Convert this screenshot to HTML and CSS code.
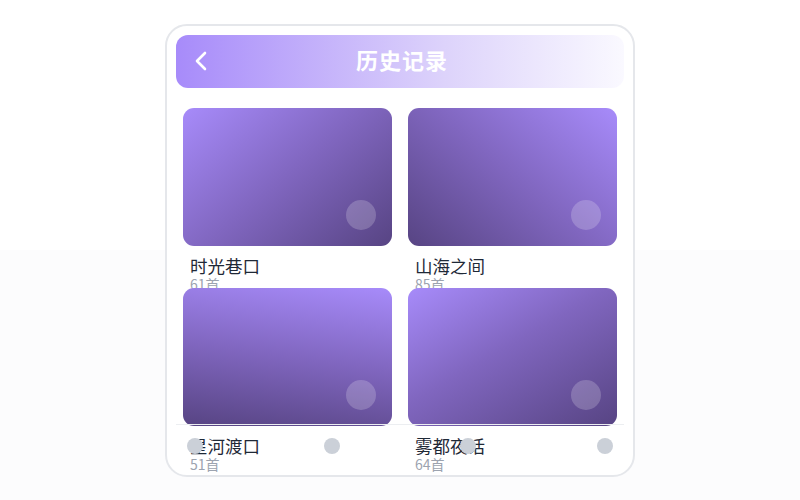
FILE: index.html
```html
<!DOCTYPE html>
<html lang="zh-CN">
<head>
  <meta charset="UTF-8">
  <meta name="viewport" content="width=device-width, initial-scale=1.0">
  <title>历史记录</title>
  <link rel="stylesheet" href="styles.css">
</head>
<body>
  <div class="phone">
    <div class="header">
      <svg class="back" width="14" height="20" viewBox="0 0 14 20">
        <path d="M11 2 L3 10 L11 18" fill="none" stroke="#fff" stroke-width="2.6" stroke-linecap="round" stroke-linejoin="round"/>
      </svg>
      <h1>历史记录</h1>
    </div>

    <div class="list">
      <div class="item">
        <div class="cover c1"><span class="play"></span></div>
        <div class="info">
          <p class="name">时光巷口</p>
          <p class="count">61首</p>
        </div>
      </div>
      <div class="item">
        <div class="cover c2"><span class="play"></span></div>
        <div class="info">
          <p class="name">山海之间</p>
          <p class="count">85首</p>
        </div>
      </div>
      <div class="item">
        <div class="cover c3"><span class="play"></span></div>
        <div class="info">
          <p class="name">星河渡口</p>
          <p class="count">51首</p>
        </div>
      </div>
      <div class="item">
        <div class="cover c4"><span class="play"></span></div>
        <div class="info">
          <p class="name">雾都夜话</p>
          <p class="count">64首</p>
        </div>
      </div>
    </div>

    <div class="tabbar">
      <span class="dot"></span>
      <span class="dot"></span>
      <span class="dot"></span>
      <span class="dot"></span>
    </div>
  </div>
</body>
</html>
```

FILE: styles.css
```css
* {
  margin: 0;
  padding: 0;
  box-sizing: border-box;
}
html {
  background: linear-gradient(to bottom, #ffffff 50%, #fcfcfd 50%);
}
body {
  font-family: "Noto Sans CJK SC", "Noto Sans", sans-serif;
  width: 100vw;
  height: 100vh;
  display: flex;
  justify-content: center;
  align-items: center;
}
.phone {
  position: relative;
  width: 470px;
  height: 453px;
  margin-top: 1px;
  padding: 9px;
  background: #fff;
  border: 2px solid #e5e7eb;
  border-radius: 22px;
  overflow: hidden;
}
.header {
  position: relative;
  height: 53px;
  padding-bottom: 5px;
  border-radius: 12px;
  background: linear-gradient(90deg, #a78bfa 0%, #ddd3fb 60%, #faf9ff 100%);
  display: flex;
  align-items: center;
  justify-content: center;
}
.back {
  position: absolute;
  left: 18px;
  top: 16px;
}
.header h1 {
  color: #fff;
  font-size: 22px;
  line-height: 28px;
  font-weight: 700;
  letter-spacing: 1px;
  margin-left: 4px;
}
.list {
  display: grid;
  grid-template-columns: 1fr 1fr;
  grid-auto-rows: 180px;
  column-gap: 16px;
  padding: 20px 7px 0;
}
.item {
  height: 180px;
}
.cover {
  position: relative;
  height: 138px;
  border-radius: 11px;
}
.c1 { background: linear-gradient(140deg, #a78bfa 0%, #8066bf 50%, #574483 100%); }
.c2 { background: linear-gradient(220deg, #a78bfa 0%, #8066bf 50%, #574483 100%); }
.c3 { background: linear-gradient(188deg, #a78bfa 0%, #8066bf 50%, #574483 100%); }
.c4 { background: linear-gradient(150deg, #a78bfa 0%, #8066bf 45%, #574483 100%); }
.play {
  position: absolute;
  right: 16px;
  bottom: 16px;
  width: 30px;
  height: 30px;
  border-radius: 50%;
  background: rgba(255, 255, 255, 0.2);
}
.info {
  padding: 8px 7px 0;
}
.name {
  font-size: 17.5px;
  line-height: 24px;
  color: #1f2937;
}
.count {
  font-size: 14px;
  line-height: 12px;
  color: #9ca3af;
}
.tabbar {
  position: absolute;
  left: 9px;
  right: 9px;
  bottom: 8px;
  display: flex;
  justify-content: space-between;
  padding: 13px 11px;
  border-top: 1px solid #eceef1;
}
.dot {
  width: 16px;
  height: 16px;
  border-radius: 50%;
  background: #cbd0d8;
}
```
